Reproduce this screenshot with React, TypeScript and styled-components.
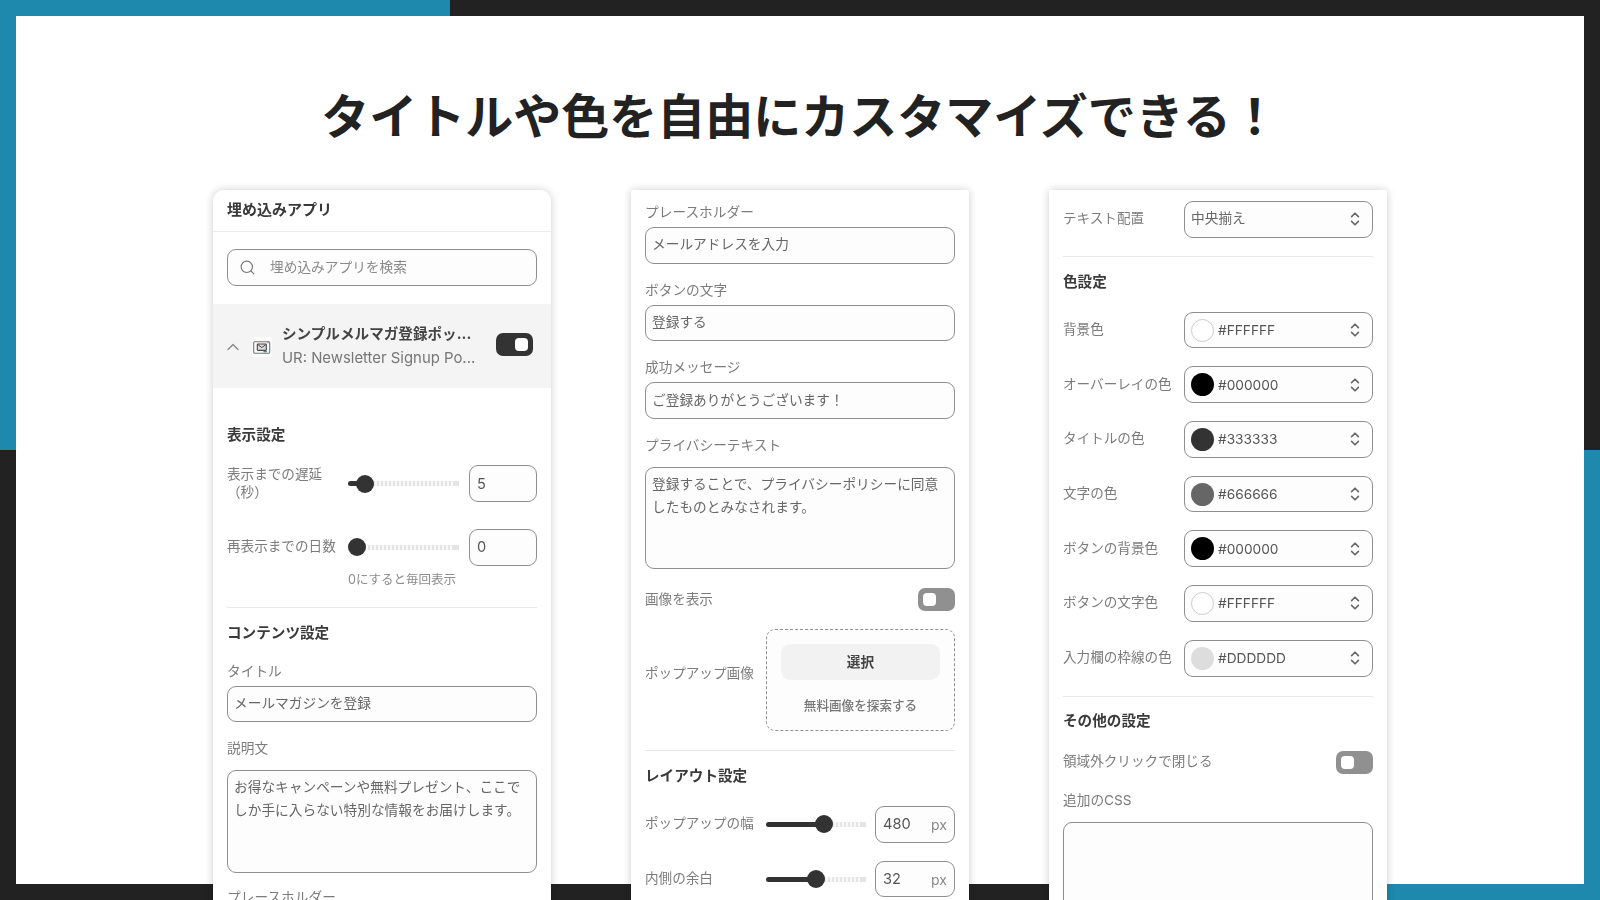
import React from "react";
import styled, { createGlobalStyle } from "styled-components";
import { Search, ChevronUp } from "lucide-react";

const GlobalStyle = createGlobalStyle`
  html, body {
    margin: 0;
    padding: 0;
    background: #222;
  }
  * {
    box-sizing: border-box;
  }
`;

const BLUE = "#1e89ad";

const Page = styled.div`
  width: 1600px;
  height: 900px;
  overflow: hidden;
  padding: 16px;
  font-family: Inter, "Noto Sans CJK JP", sans-serif;
  background:
    linear-gradient(${BLUE}, ${BLUE}) 0 0 / 450px 16px no-repeat,
    linear-gradient(${BLUE}, ${BLUE}) 0 0 / 16px 450px no-repeat,
    linear-gradient(${BLUE}, ${BLUE}) 100% 100% / 16px 450px no-repeat,
    linear-gradient(${BLUE}, ${BLUE}) 100% 100% / 450px 16px no-repeat,
    #222;
`;

const Sheet = styled.div`
  height: 868px;
  background: #fff;
  padding-top: 67px;
`;

const Title = styled.h1`
  margin: 0;
  height: 60px;
  font-size: 48px;
  line-height: 60px;
  font-weight: 700;
  color: #222;
  text-align: center;
  font-family: "Noto Sans CJK JP", sans-serif;
`;

const Columns = styled.div`
  margin-top: 47px;
  display: flex;
  justify-content: center;
  gap: 80px;
  align-items: flex-start;
  filter: blur(0.3px);
`;

const Card = styled.div<{ $rounded?: boolean; $pad?: number }>`
  width: 338px;
  min-height: 720px;
  background: #fff;
  border-radius: ${(p) => (p.$rounded ? "11px 11px 0 0" : "2px 2px 0 0")};
  box-shadow: 0 0 9px rgba(0, 0, 0, 0.2);
  padding-top: ${(p) => p.$pad ?? 0}px;
`;

const Body = styled.div`
  padding: 0 14px;
`;

const CardHeader = styled.div`
  height: 42px;
  padding: 0 14px;
  line-height: 40px;
  border-bottom: 1px solid #ececec;
  font-size: 15px;
  font-weight: 700;
  color: #3a3a3a;
`;

const SearchBox = styled.div`
  margin: 17px 14px 18px;
  height: 37px;
  display: flex;
  align-items: center;
  padding: 0 0 3px 11px;
  gap: 14px;
  border: 1px solid #8f8f8f;
  border-radius: 9px;
  background: #fdfdfd;
  font-size: 13.7px;
  color: #8a8a8a;
  svg {
    color: #777;
    flex: none;
    margin-top: 3px;
  }
`;

const AppRow = styled.div`
  height: 84px;
  background: #f4f4f4;
  display: flex;
  align-items: center;
  padding: 0 18px 0 14px;
  svg.chevron {
    color: #888;
    margin: 2px 9px 0 -4px;
    flex: none;
  }
`;

const AppIcon = styled.div`
  width: 20px;
  height: 20px;
  border-radius: 3px;
  background: #fbfbfb;
  display: flex;
  align-items: center;
  justify-content: center;
  margin: 2px 10px 0 0;
  flex: none;
`;

const AppText = styled.div`
  flex: 1;
  min-width: 0;
`;

const AppName = styled.div`
  font-size: 14.6px;
  line-height: 23px;
  font-weight: 700;
  color: #444;
  white-space: nowrap;
`;

const AppSub = styled.div`
  font-size: 14.9px;
  line-height: 23px;
  padding-top: 1px;
  color: #777;
  white-space: nowrap;
`;

const Toggle = styled.div<{ $on?: boolean }>`
  width: 37px;
  height: 23px;
  flex: none;
  border-radius: 7px;
  background: ${(p) => (p.$on ? "#333" : "#909090")};
  display: flex;
  align-items: center;
  justify-content: ${(p) => (p.$on ? "flex-end" : "flex-start")};
  padding: 0 5px;
  &::after {
    content: "";
    width: 13px;
    height: 13px;
    border-radius: 4px;
    background: #fff;
  }
`;

const AppToggle = styled(Toggle)`
  margin-bottom: 3px;
`;

const Heading = styled.div<{ $top: number }>`
  margin-top: ${(p) => p.$top}px;
  font-size: 14.6px;
  line-height: 20px;
  font-weight: 700;
  color: #3a3a3a;
`;

const Row = styled.div<{ $top: number; $gap?: number }>`
  margin-top: ${(p) => p.$top}px;
  display: flex;
  align-items: center;
  gap: ${(p) => p.$gap ?? 0}px;
`;

const RowLabel = styled.div<{ $lift?: number }>`
  width: 121px;
  flex: none;
  font-size: 13.6px;
  line-height: 18px;
  color: #7c7c7c;
  white-space: nowrap;
  padding-bottom: ${(p) => p.$lift ?? 2}px;
`;

const Spacer = styled.div`
  flex: 1;
`;

const FieldLabel = styled.div<{ $top: number }>`
  margin-top: ${(p) => p.$top}px;
  font-size: 13.7px;
  line-height: 18px;
  color: #7c7c7c;
`;

const Input = styled.div<{ $top?: number; $width?: number }>`
  margin-top: ${(p) => p.$top ?? 6}px;
  width: ${(p) => (p.$width ? `${p.$width}px` : "100%")};
  height: 36.7px;
  flex: none;
  display: flex;
  align-items: center;
  justify-content: space-between;
  padding: 0 6px 4px;
  border: 1px solid #8f8f8f;
  border-radius: 9px;
  background: #fdfdfd;
  font-size: 13.7px;
  color: #666;
`;

const Numeric = styled(Input)`
  margin-top: 0;
  padding: 0 7px;
  font-size: 14.6px;
  color: #555;
  span {
    color: #888;
    font-size: 14px;
  }
`;

const TextArea = styled.div<{ $top: number; $height: number }>`
  margin-top: ${(p) => p.$top}px;
  height: ${(p) => p.$height}px;
  padding: 5px 6px;
  border: 1px solid #8f8f8f;
  border-radius: 9px;
  background: #fdfdfd;
  font-size: 13.7px;
  line-height: 23px;
  color: #666;
`;

const Hint = styled.div`
  margin-top: 6px;
  padding-left: 121px;
  font-size: 12.5px;
  line-height: 16px;
  color: #8c8c8c;
`;

const Divider = styled.div<{ $top: number }>`
  margin-top: ${(p) => p.$top}px;
  height: 1px;
  background: #e8e8e8;
`;

const SliderTrack = styled.div<{ $width: number }>`
  position: relative;
  width: ${(p) => p.$width}px;
  height: 18px;
  flex: none;
  display: flex;
  align-items: center;
`;

const SliderFill = styled.div<{ $width: number }>`
  width: ${(p) => p.$width}px;
  height: 5px;
  background: #333;
  border-radius: 3px 0 0 3px;
  flex: none;
`;

const SliderRest = styled.div`
  flex: 1;
  height: 5px;
  background: repeating-linear-gradient(90deg, #e4e4e4 0 2px, #f8f8f8 2px 4px);
  border-right: 5px solid #e4e4e4;
`;

const SliderThumb = styled.div<{ $left: number }>`
  position: absolute;
  top: 0;
  left: ${(p) => p.$left - 9}px;
  width: 18px;
  height: 18px;
  border-radius: 50%;
  background: #333;
`;

const DropZone = styled.div`
  width: 189px;
  height: 102px;
  flex: none;
  border: 1px dashed #8f8f8f;
  border-radius: 9px;
  background: #fdfdfd;
  padding: 14px 14px 0;
  display: flex;
  flex-direction: column;
  align-items: center;
`;

const PickButton = styled.div`
  width: 100%;
  height: 36px;
  padding-bottom: 2px;
  border-radius: 9px;
  background: #f2f2f2;
  display: flex;
  align-items: center;
  justify-content: center;
  font-size: 13.7px;
  font-weight: 700;
  color: #444;
`;

const ExploreLink = styled.div`
  margin-top: 16px;
  font-size: 12.6px;
  line-height: 19px;
  font-weight: 500;
  color: #777;
`;

const Select = styled.div`
  width: 189px;
  height: 36.7px;
  flex: none;
  display: flex;
  align-items: center;
  padding: 0 11px 0 6px;
  gap: 4px;
  border: 1px solid #8f8f8f;
  border-radius: 9px;
  background: #fdfdfd;
  font-size: 13.7px;
  color: #666;
`;

const Swatch = styled.div<{ $color: string }>`
  width: 23px;
  height: 23px;
  flex: none;
  border-radius: 50%;
  background: ${(p) => p.$color};
  border: ${(p) => (p.$color === "#FFFFFF" ? "1px solid #ccc" : "none")};
`;

const SelectValue = styled.div`
  flex: 1;
  color: #555;
`;

const SelectText = styled(SelectValue)`
  padding-bottom: 5px;
  color: #666;
`;

const UpDown = () => (
  <svg width="12" height="16" viewBox="0 0 12 16" fill="none" stroke="#666" strokeWidth="1.6" strokeLinecap="round" strokeLinejoin="round">
    <path d="M2.6 5.6 6 2.2 9.4 5.6" />
    <path d="M2.6 10.4 6 13.8 9.4 10.4" />
  </svg>
);

const MailIcon = () => (
  <svg width="18" height="15" viewBox="0 0 18 15" fill="none">
    <rect x="0.7" y="1.7" width="16" height="11.6" rx="1" stroke="#777" strokeWidth="1.1" />
    <rect x="4.3" y="4" width="9" height="6.4" rx="0.6" fill="#ddd" stroke="#444" strokeWidth="1.1" />
    <path d="M4.8 4.6 8.8 7.6 12.8 4.6" stroke="#444" strokeWidth="1" />
    <path d="M10.5 11.6h3.4" stroke="#2f8fc4" strokeWidth="1.4" />
    <path d="M15 0.8v2.6" stroke="#888" strokeWidth="1" />
  </svg>
);

function SliderRow(props: { top: number; label: React.ReactNode; width: number; at: number; fill?: boolean; children: React.ReactNode }) {
  return (
    <Row $top={props.top} $gap={0}>
      {props.label}
      <SliderTrack $width={props.width}>
        {props.fill && <SliderFill $width={props.at} />}
        <SliderRest />
        <SliderThumb $left={props.at} />
      </SliderTrack>
      <Spacer />
      {props.children}
    </Row>
  );
}

const colors = [
  { label: "背景色", value: "#FFFFFF" },
  { label: "オーバーレイの色", value: "#000000" },
  { label: "タイトルの色", value: "#333333" },
  { label: "文字の色", value: "#666666" },
  { label: "ボタンの背景色", value: "#000000" },
  { label: "ボタンの文字色", value: "#FFFFFF" },
  { label: "入力欄の枠線の色", value: "#DDDDDD" },
];

export default function App() {
  return (
    <Page>
      <GlobalStyle />
      <Sheet>
        <Title>タイトルや色を自由にカスタマイズできる！</Title>
        <Columns>
          <Card $rounded>
            <CardHeader>埋め込みアプリ</CardHeader>
            <SearchBox>
              <Search size={17} strokeWidth={1.6} />
              埋め込みアプリを検索
            </SearchBox>
            <AppRow>
              <ChevronUp className="chevron" size={20} strokeWidth={1.6} />
              <AppIcon>
                <MailIcon />
              </AppIcon>
              <AppText>
                <AppName>シンプルメルマガ登録ポッ...</AppName>
                <AppSub>UR: Newsletter Signup Po...</AppSub>
              </AppText>
              <AppToggle $on />
            </AppRow>
            <Body>
              <Heading $top={37}>表示設定</Heading>
              <SliderRow
                top={19.5}
                width={111}
                at={17}
                fill
                label={
                  <RowLabel>
                    表示までの遅延
                    <br />
                    （秒）
                  </RowLabel>
                }
              >
                <Numeric $width={68}>5</Numeric>
              </SliderRow>
              <SliderRow top={26.5} width={111} at={9} label={<RowLabel>再表示までの日数</RowLabel>}>
                <Numeric $width={68}>0</Numeric>
              </SliderRow>
              <Hint>0にすると毎回表示</Hint>
              <Divider $top={19} />
              <Heading $top={15}>コンテンツ設定</Heading>
              <FieldLabel $top={19}>タイトル</FieldLabel>
              <Input>メールマガジンを登録</Input>
              <FieldLabel $top={17}>説明文</FieldLabel>
              <TextArea $top={13} $height={103}>
                お得なキャンペーンや無料プレゼント、ここでしか手に入らない特別な情報をお届けします。
              </TextArea>
              <FieldLabel $top={15}>プレースホルダー</FieldLabel>
            </Body>
          </Card>

          <Card $pad={13}>
            <Body>
              <FieldLabel $top={0}>プレースホルダー</FieldLabel>
              <Input>メールアドレスを入力</Input>
              <FieldLabel $top={17}>ボタンの文字</FieldLabel>
              <Input>登録する</Input>
              <FieldLabel $top={17}>成功メッセージ</FieldLabel>
              <Input>ご登録ありがとうございます！</Input>
              <FieldLabel $top={17}>プライバシーテキスト</FieldLabel>
              <TextArea $top={13} $height={102}>
                登録することで、プライバシーポリシーに同意したものとみなされます。
              </TextArea>
              <Row $top={19}>
                <RowLabel>画像を表示</RowLabel>
                <Spacer />
                <Toggle />
              </Row>
              <Row $top={18}>
                <RowLabel $lift={14}>ポップアップ画像</RowLabel>
                <DropZone>
                  <PickButton>選択</PickButton>
                  <ExploreLink>無料画像を探索する</ExploreLink>
                </DropZone>
              </Row>
              <Divider $top={19} />
              <Heading $top={15}>レイアウト設定</Heading>
              <SliderRow top={20} width={100} at={58} fill label={<RowLabel>ポップアップの幅</RowLabel>}>
                <Numeric $width={80}>
                  480<span>px</span>
                </Numeric>
              </SliderRow>
              <SliderRow top={18} width={100} at={50} fill label={<RowLabel>内側の余白</RowLabel>}>
                <Numeric $width={80}>
                  32<span>px</span>
                </Numeric>
              </SliderRow>
            </Body>
          </Card>

          <Card $pad={11}>
            <Body>
              <Row $top={0}>
                <RowLabel>テキスト配置</RowLabel>
                <Select>
                  <SelectText>中央揃え</SelectText>
                  <UpDown />
                </Select>
              </Row>
              <Divider $top={18} />
              <Heading $top={15}>色設定</Heading>
              {colors.map((c, i) => (
                <Row key={c.label} $top={i === 0 ? 20 : 18}>
                  <RowLabel>{c.label}</RowLabel>
                  <Select>
                    <Swatch $color={c.value} />
                    <SelectValue>{c.value}</SelectValue>
                    <UpDown />
                  </Select>
                </Row>
              ))}
              <Divider $top={19} />
              <Heading $top={14}>その他の設定</Heading>
              <Row $top={20}>
                <RowLabel>領域外クリックで閉じる</RowLabel>
                <Spacer />
                <Toggle />
              </Row>
              <FieldLabel $top={17}>追加のCSS</FieldLabel>
              <TextArea $top={13} $height={120} />
            </Body>
          </Card>
        </Columns>
      </Sheet>
    </Page>
  );
}
